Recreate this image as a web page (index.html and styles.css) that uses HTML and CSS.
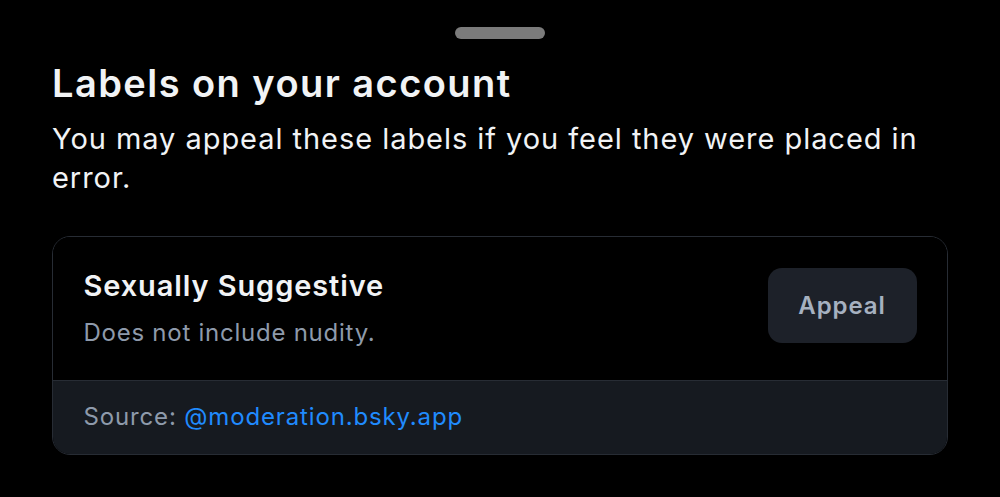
FILE: index.html
```html
<!DOCTYPE html>
<html>
<head>
<meta charset="utf-8">
<link rel="stylesheet" href="styles.css">
</head>
<body>
<div class="sheet">
  <div class="handle-row"><div class="handle"></div></div>
  <h1 class="title">Labels on your account</h1>
  <p class="subtitle">You may appeal these labels if you feel they were placed in error.</p>
  <div class="card">
    <div class="card-main">
      <div class="label-info">
        <div class="label-name">Sexually Suggestive</div>
        <div class="label-desc">Does not include nudity.</div>
      </div>
      <button class="appeal">Appeal</button>
    </div>
    <div class="card-footer">
      <span class="source">Source: </span><span class="link">@moderation.bsky.app</span>
    </div>
  </div>
</div>
</body>
</html>
```

FILE: styles.css
```css
html, body {
  margin: 0;
  padding: 0;
  background: #000;
  height: 100%;
}
body {
  font-family: Inter, "Noto Sans", sans-serif;
  color: #f1f3f5;
  overflow: hidden;
}
.sheet {
  padding: 27px 52px 0 52px;
}
.handle-row {
  display: flex;
  justify-content: center;
}
.handle {
  width: 90px;
  height: 12px;
  border-radius: 6px;
  background: #7b7b7b;
}
.title {
  margin: 21px 0 0 0;
  font-size: 38px;
  line-height: 46px;
  font-weight: 600;
  color: #f1f3f5;
  letter-spacing: 1.45px;
}
.subtitle {
  margin: 13px 0 0 0;
  font-size: 29px;
  line-height: 39px;
  font-weight: 400;
  color: #f1f3f5;
  letter-spacing: 0.95px;
}
.card {
  margin-top: 39px;
  border: 1.5px solid #272c34;
  border-radius: 18px;
  overflow: hidden;
}
.card-main {
  display: flex;
  align-items: flex-start;
  justify-content: space-between;
  padding: 31px 30.5px 31.5px 30.5px;
  background: #000;
}
.label-name {
  font-size: 29px;
  line-height: 36px;
  font-weight: 600;
  color: #f1f3f5;
  letter-spacing: 0.9px;
}
.label-desc {
  margin-top: 14px;
  font-size: 24px;
  line-height: 30px;
  color: #8e9aab;
  letter-spacing: 0.75px;
}
.appeal {
  font-family: inherit;
  width: 149px;
  height: 75px;
  border: none;
  border-radius: 14px;
  background: #1d2129;
  color: #a6b1c0;
  font-size: 24px;
  font-weight: 600;
  letter-spacing: 0.9px;
  padding: 0;
}
.card-footer {
  border-top: 1.5px solid #272c34;
  background: #161a20;
  padding: 20px 30.5px 21px 30.5px;
  font-size: 24px;
  line-height: 32px;
  letter-spacing: 0.85px;
}
.source {
  color: #8e9aab;
}
.link {
  color: #208bfe;
}
```
